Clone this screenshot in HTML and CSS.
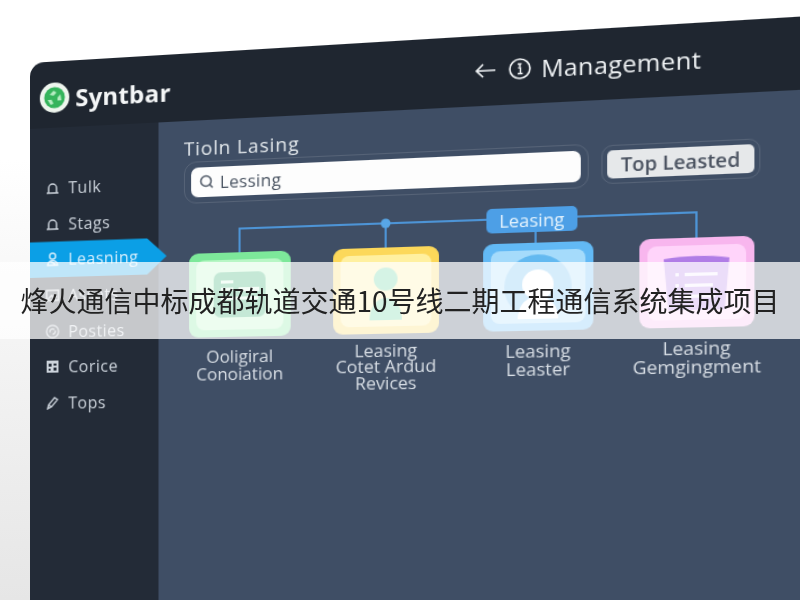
FILE: index.html
```html
<!DOCTYPE html>
<html lang="zh-CN">
<head>
  <meta charset="UTF-8" />
  <meta name="viewport" content="width=device-width, initial-scale=1.0"/>
  <title>烽火通信中标成都轨道交通10号线二期工程通信系统集成项目</title>
  <link rel="stylesheet" href="styles.css">
</head>
<body>
  <div class="app">
    <header class="topbar">
      <div class="brand">
        <svg class="logo" viewBox="0 0 30 30">
          <circle cx="15" cy="15" r="15" fill="#eef5ee"/>
          <circle cx="15" cy="15" r="10.5" fill="#35b45c"/>
          <path d="M10 12l4-4 3 2-3 3zM21 12l1 6-4 0 0-3zM8 17l4 0 2 4-3 1z" fill="#b5ecc2"/>
        </svg>
        <span class="brand-name">Syntbar</span>
      </div>
      <div class="page-title">
        <svg class="back" viewBox="0 0 20 16">
          <path d="M19 8H2M8 2L2 8l6 6" fill="none" stroke="#f1f4f6" stroke-width="1.6"/>
        </svg>
        <svg class="info" viewBox="0 0 20 20">
          <circle cx="10" cy="10" r="9" fill="none" stroke="#f1f4f6" stroke-width="1.6"/>
          <path d="M8 5.5h3.5M10 5.5V8M8.5 9h2v5.5M8 14.5h4.5" fill="none" stroke="#f1f4f6" stroke-width="1.4"/>
        </svg>
        <span>Management</span>
      </div>
    </header>

    <div class="layout">
      <nav class="sidebar">
        <a class="nav-item">
          <svg viewBox="0 0 14 14"><path d="M1 12h12M3 12V7a4 4 0 0 1 8 0v5" fill="none" stroke="currentColor" stroke-width="1.5"/></svg>
          Tulk
        </a>
        <a class="nav-item">
          <svg viewBox="0 0 14 14"><path d="M1 12h12M3 12V7a4 4 0 0 1 8 0v5" fill="none" stroke="currentColor" stroke-width="1.5"/></svg>
          Stags
        </a>
        <a class="nav-item active">
          <svg viewBox="0 0 14 14"><circle cx="7" cy="4" r="3" fill="none" stroke="currentColor" stroke-width="1.5"/><path d="M2 13c0-6 10-6 10 0zM4 9l6 3" fill="none" stroke="currentColor" stroke-width="1.5"/></svg>
          Leasning
        </a>
        <a class="nav-item">
          <svg viewBox="0 0 14 14"><rect x="1" y="2" width="12" height="10" fill="none" stroke="currentColor" stroke-width="1.5"/><path d="M2 11l4-4 3 3 2-2" fill="none" stroke="currentColor" stroke-width="1.5"/></svg>
          Assets
        </a>
        <a class="nav-item">
          <svg viewBox="0 0 16 16"><circle cx="8" cy="8" r="7" fill="none" stroke="currentColor" stroke-width="1.4"/><path d="M5 9a3 3 0 0 1 5-3M11 7a3 3 0 0 1-3 4" fill="none" stroke="currentColor" stroke-width="1.4"/></svg>
          Posties
        </a>
        <a class="nav-item">
          <svg viewBox="0 0 14 14"><path d="M1 1h12v12H1zM3 4v3h3V4zM8 4v2h3V4zM3 9v2h2V9zM8 8v3h3V8z" fill="currentColor" fill-rule="evenodd"/></svg>
          Corice
        </a>
        <a class="nav-item">
          <svg viewBox="0 0 14 14"><path d="M2 13l1-4 6-7 3 2-6 7zM3 9l3 2" fill="none" stroke="currentColor" stroke-width="1.4"/></svg>
          Tops
        </a>
      </nav>

      <main class="main">
        <h1 class="title">Tioln Lasing</h1>

        <div class="toolbar">
          <div class="search-frame">
            <div class="search">
              <svg viewBox="0 0 14 14"><circle cx="6.5" cy="6.5" r="5" fill="none" stroke="#4b5563" stroke-width="1.5"/><path d="M10 10l3 3" stroke="#4b5563" stroke-width="1.5"/></svg>
              Lessing
            </div>
          </div>
          <div class="button-frame">
            <button class="top-button">Top Leasted</button>
          </div>
        </div>

        <div class="tree">
          <svg class="lines" viewBox="0 0 512 33">
            <path d="M49 33V10H463V33M187 10V33M323 10V33" fill="none" stroke="#4d94d6" stroke-width="2"/>
            <circle cx="187" cy="10" r="4.5" fill="#58a6e6"/>
          </svg>
          <span class="pill">Leasing</span>
        </div>

        <div class="cards">
          <div class="column">
            <div class="card green">
              <div class="card-inner">
                <svg viewBox="0 0 50 44">
                  <rect width="50" height="44" rx="7" fill="#1fa862"/>
                  <path d="M7 8h12v3H7zM7 15h12v3H7zM24 15h20v4H24zM7 24h36v3H7z" fill="#d5f7de"/>
                </svg>
              </div>
            </div>
            <p class="label">Ooligiral<br>Conoiation</p>
          </div>
          <div class="column">
            <div class="card yellow">
              <div class="card-inner">
                <svg viewBox="0 0 50 50">
                  <circle cx="25" cy="11" r="11" fill="#5fd09a"/>
                  <path d="M10 50c0-28 30-28 30 0z" fill="#5fd09a"/>
                </svg>
              </div>
            </div>
            <p class="label tight">Leasing<br>Cotet Ardud<br>Revices</p>
          </div>
          <div class="column">
            <div class="card blue">
              <div class="card-inner">
                <svg viewBox="0 0 60 60">
                  <circle cx="30" cy="30" r="30" fill="#63b9f0"/>
                  <circle cx="30" cy="28" r="14" fill="#fff"/>
                  <path d="M12 60c0-28 36-28 36 0z" fill="#fff"/>
                </svg>
              </div>
            </div>
            <p class="label">Leasing<br>Leaster</p>
          </div>
          <div class="column">
            <div class="card pink">
              <div class="card-inner">
                <svg viewBox="0 0 56 50">
                  <path d="M0 3C18 0 38 0 56 3L52 50H4z" fill="#b07de6"/>
                  <path d="M10 16h3v3h-3zM18 16h28v3H18zM10 26h3v3h-3zM18 26h24v3H18zM10 36h3v3h-3zM18 36h26v3H18z" fill="#f4ecff"/>
                </svg>
              </div>
            </div>
            <p class="label">Leasing<br>Gemgingment</p>
          </div>
        </div>
      </main>
    </div>
  </div>

  <div class="banner">烽火通信中标成都轨道交通10号线二期工程通信系统集成项目</div>
</body>
</html>
```

FILE: styles.css
```css
html, body {
  margin: 0;
  height: 600px;
  overflow: hidden;
}

body {
  position: relative;
  font-family: "Open Sans", "Liberation Sans", sans-serif;
  background: linear-gradient(to bottom, #fff 0, #fff 160px, #f4f4f4 340px, #e6e6e6 600px);
  padding: 63px 0 0 30px;
  box-sizing: border-box;
}

/* the whole window leans back on its left edge */
.app {
  width: 720px;
  height: 537px;
  background: #1f2630;
  border-radius: 14px 0 0 0;
  overflow: hidden;
  transform-origin: 0 421px;
  transform: perspective(1485px) rotateY(-12deg);
  filter: blur(0.45px);
}

.topbar {
  display: flex;
  height: 65.5px;
  padding-left: 10px;
  box-sizing: border-box;
}

.brand {
  flex: 0 0 417px;
  display: flex;
  align-items: center;
  gap: 6px;
  height: 30px;
  margin-top: 21px;
}

.logo {
  width: 30px;
  height: 30px;
}

.brand-name {
  font-size: 24px;
  font-weight: 700;
  letter-spacing: 0.2px;
  color: #f4f6f7;
}

.page-title {
  display: flex;
  align-items: center;
  height: 30px;
  margin-top: 18px;
  color: #f1f4f6;
  font-size: 22px;
  font-weight: 500;
  letter-spacing: 0.3px;
}

.back {
  width: 20px;
  height: 16px;
  margin-right: 11px;
}

.info {
  width: 20px;
  height: 20px;
  margin-right: 9px;
}

.layout {
  display: flex;
  height: 471.5px;
}

.sidebar {
  position: relative;
  z-index: 1;
  flex: 0 0 128.5px;
  min-width: 0;
  padding-top: 42.5px;
  box-sizing: border-box;
  background: #232b37;
}

.nav-item {
  display: flex;
  align-items: center;
  gap: 9px;
  height: 35.7px;
  padding-left: 16px;
  box-sizing: border-box;
  color: #cdd4dc;
  font-size: 16px;
  letter-spacing: 0.5px;
}

.nav-item svg {
  width: 14px;
  height: 14px;
  flex: none;
}

.nav-item.active {
  width: 137px;
  color: #d6eefc;
  background: #0b9fe6;
  clip-path: polygon(0 0, 86% 0, 100% 50%, 86% 100%, 0 100%);
}

.main {
  flex: 1;
  padding: 17px 0 0 25.5px;
  background: #3f4e65;
}

.title {
  margin: 0;
  font-size: 18.5px;
  line-height: 20px;
  font-weight: 400;
  letter-spacing: 0.8px;
  color: #e3e8ec;
}

.toolbar {
  display: flex;
  align-items: center;
  gap: 11px;
  margin-top: 3.5px;
}

.search-frame {
  width: 375px;
  padding: 5px 6px;
  box-sizing: border-box;
  border: 1px solid rgba(255, 255, 255, 0.12);
  border-radius: 12px;
}

.search {
  display: flex;
  align-items: center;
  gap: 6px;
  height: 28.5px;
  padding-left: 8px;
  border-radius: 7px;
  background: #fdfdfd;
  color: #4b5563;
  font-size: 16.5px;
  letter-spacing: 0.3px;
}

.search svg {
  width: 14px;
  height: 14px;
}

.button-frame {
  padding: 4px;
  border: 1px solid rgba(255, 255, 255, 0.12);
  border-radius: 10px;
}

.top-button {
  display: block;
  width: 126px;
  height: 26px;
  padding: 0;
  border: none;
  border-radius: 5px;
  background: #e6e8ea;
  color: #4a5260;
  font-family: inherit;
  font-size: 17.5px;
  font-weight: 600;
}

.tree {
  position: relative;
  width: 512px;
  height: 33px;
  margin: 16px 0 0 5px;
}

.lines {
  display: block;
  width: 512px;
  height: 33px;
}

.pill {
  position: absolute;
  top: 0;
  left: 279px;
  width: 81px;
  height: 23px;
  line-height: 23px;
  text-align: center;
  border-radius: 5px;
  background: #4d9fe6;
  color: #e4f3fd;
  font-size: 16.5px;
}

.cards {
  display: grid;
  grid-template-columns: repeat(4, 98px);
  gap: 40px;
  margin-left: 5px;
}

.card {
  height: 82px;
  padding: 7px;
  box-sizing: border-box;
  border-radius: 9px;
}

.card-inner {
  display: flex;
  align-items: center;
  justify-content: center;
  height: 100%;
  border-radius: 8px;
  overflow: hidden;
}

.green { background: #7de89a; }
.green .card-inner { background: #b8f6c5; }
.green svg { width: 50px; height: 44px; }

.yellow { background: #fcd85a; }
.yellow .card-inner { background: #fff0a0; }
.yellow svg { width: 50px; height: 50px; margin-top: 6px; }

.blue { background: #62b9f5; }
.blue .card-inner { background: #a5dbfb; }
.blue svg { width: 60px; height: 60px; }

.pink { background: #f8b6ee; }
.pink .card-inner { background: #ffd4fa; }
.pink svg { width: 56px; height: 50px; }

.label {
  margin: 10px -20px 0;
  text-align: center;
  line-height: 17.5px;
  font-size: 16.5px;
  white-space: nowrap;
  color: #d8dee5;
}

.label.tight {
  margin-top: 8px;
  line-height: 15.5px;
}

.banner {
  position: absolute;
  left: 0;
  top: 262px;
  width: 800px;
  height: 77px;
  line-height: 77px;
  text-align: center;
  white-space: nowrap;
  background: rgba(255, 255, 255, 0.74);
  color: #222;
  font-size: 28px;
  font-family: "Noto Sans CJK SC", "Noto Sans", sans-serif;
}
```
